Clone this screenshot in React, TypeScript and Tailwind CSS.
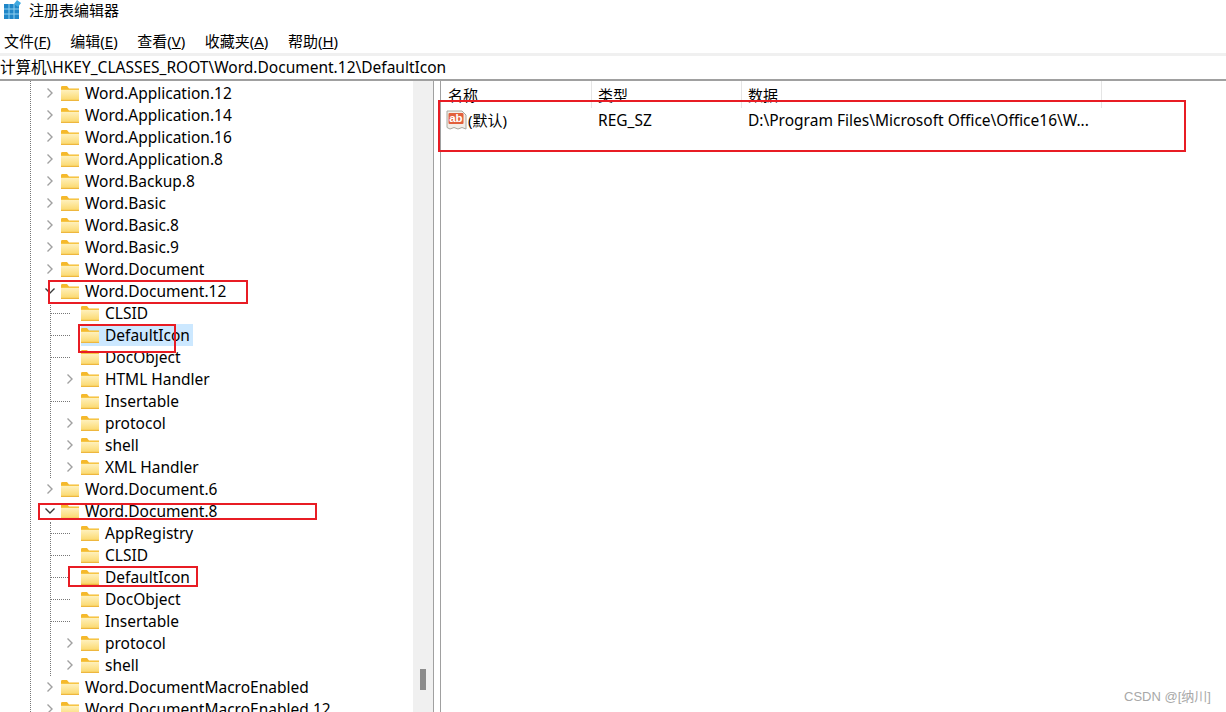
import React from 'react';

type Row = { name: string; depth: 0 | 1; state?: 'open' | 'closed' | 'leaf'; selected?: boolean };

const ROWS: Row[] = [
  { name: 'Word.Application.12', depth: 0, state: 'closed' },
  { name: 'Word.Application.14', depth: 0, state: 'closed' },
  { name: 'Word.Application.16', depth: 0, state: 'closed' },
  { name: 'Word.Application.8', depth: 0, state: 'closed' },
  { name: 'Word.Backup.8', depth: 0, state: 'closed' },
  { name: 'Word.Basic', depth: 0, state: 'closed' },
  { name: 'Word.Basic.8', depth: 0, state: 'closed' },
  { name: 'Word.Basic.9', depth: 0, state: 'closed' },
  { name: 'Word.Document', depth: 0, state: 'closed' },
  { name: 'Word.Document.12', depth: 0, state: 'open' },
  { name: 'CLSID', depth: 1, state: 'leaf' },
  { name: 'DefaultIcon', depth: 1, state: 'leaf', selected: true },
  { name: 'DocObject', depth: 1, state: 'leaf' },
  { name: 'HTML Handler', depth: 1, state: 'closed' },
  { name: 'Insertable', depth: 1, state: 'leaf' },
  { name: 'protocol', depth: 1, state: 'closed' },
  { name: 'shell', depth: 1, state: 'closed' },
  { name: 'XML Handler', depth: 1, state: 'closed' },
  { name: 'Word.Document.6', depth: 0, state: 'closed' },
  { name: 'Word.Document.8', depth: 0, state: 'open' },
  { name: 'AppRegistry', depth: 1, state: 'leaf' },
  { name: 'CLSID', depth: 1, state: 'leaf' },
  { name: 'DefaultIcon', depth: 1, state: 'leaf' },
  { name: 'DocObject', depth: 1, state: 'leaf' },
  { name: 'Insertable', depth: 1, state: 'leaf' },
  { name: 'protocol', depth: 1, state: 'closed' },
  { name: 'shell', depth: 1, state: 'closed' },
  { name: 'Word.DocumentMacroEnabled', depth: 0, state: 'closed' },
  { name: 'Word.DocumentMacroEnabled.12', depth: 0, state: 'closed' },
];

const MENUS = [
  ['文件(', 'F', ')'],
  ['编辑(', 'E', ')'],
  ['查看(', 'V', ')'],
  ['收藏夹(', 'A', ')'],
  ['帮助(', 'H', ')'],
];

function Folder() {
  return (
    <svg width="18" height="15" viewBox="0 0 18 15" className="shrink-0">
      <defs>
        <linearGradient id="fold" x1="0" y1="0" x2="0" y2="1">
          <stop offset="0" stopColor="#fff3c4" />
          <stop offset="1" stopColor="#fbd768" />
        </linearGradient>
      </defs>
      <path d="M0 1.5C0 .7.5 0 1.2 0H6l2 2.5h10V5H0z" fill="#f5b92c" />
      <rect x="0" y="3" width="18" height="12" fill="url(#fold)" />
      <rect x="0" y="13.8" width="18" height="1.2" fill="#eeb73e" />
      <rect x="0" y="3" width="18" height="1" fill="#f6c544" />
    </svg>
  );
}

function Chevron({ open }: { open: boolean }) {
  return (
    <svg width="12" height="12" viewBox="0 0 12 12" className="shrink-0">
      {open ? (
        <path d="M1.5 3.5 6 8l4.5-4.5" fill="none" stroke="#3a3a3a" strokeWidth="1.4" />
      ) : (
        <path d="M3.5 1.5 8 6l-4.5 4.5" fill="none" stroke="#a0a0a0" strokeWidth="1.4" />
      )}
    </svg>
  );
}

function TreeRow({ row }: { row: Row }) {
  return (
    <div className={`flex h-[22px] items-center ${row.depth === 1 ? 'pl-[64px]' : 'pl-[44px]'}`}>
      <div className="flex w-[17px] shrink-0 justify-start">
        {row.state === 'leaf' ? (
          <div className="ml-[-14px] w-[20px] border-t border-dotted border-[#777]" />
        ) : (
          <Chevron open={row.state === 'open'} />
        )}
      </div>
      <div
        className={`flex h-[22px] items-center pr-[3px] ${row.selected ? 'bg-[#cce8ff]' : ''}`}
      >
        <Folder />
        <span className="ml-[6px] whitespace-nowrap pt-[2px] text-[15.5px] text-black">{row.name}</span>
      </div>
    </div>
  );
}

export default function App() {
  return (
    <div className="relative h-[712px] w-[1226px] overflow-hidden bg-white font-['Noto_Sans','Noto_Sans_CJK_SC',sans-serif] text-black">
      {/* 标题栏 */}
      <div className="flex h-[20px] items-center gap-[7px] pl-[4px] text-[15px]">
        <svg width="18" height="20" viewBox="0 0 18 20">
          <rect x="0" y="4" width="15" height="15" fill="#1f86c8" />
          <path d="M5 4v15M10 4v15M0 9h15M0 14h15" stroke="#8fd0f0" strokeWidth="1" />
          <path d="M13 0l4 3-3 4-4-3z" fill="#3fa9e0" />
        </svg>
        <span>注册表编辑器</span>
      </div>

      {/* 菜单 */}
      <div className="mt-[8px] flex h-[25px] items-center gap-[19.5px] pl-[4px] pt-[2px] text-[15px]">
        {MENUS.map(m => (
          <span key={m[1]}>
            {m[0]}
            <span className="underline">{m[1]}</span>
            {m[2]}
          </span>
        ))}
      </div>
      <div className="h-[3px] bg-[#f0f0f0]" />

      {/* 地址栏 */}
      <div className="flex h-[23px] items-center whitespace-nowrap text-[15.5px]">计算机\HKEY_CLASSES_ROOT\Word.Document.12\DefaultIcon</div>
      <div className="h-[2px] bg-[#a0a0a0]" />

      <div className="flex h-[631px]">
        {/* 左侧树 */}
        <div className="relative w-[433px] shrink-0 overflow-hidden pt-[1px]">
          <div className="absolute bottom-0 left-[30px] top-0 border-l border-dotted border-[#777]" />
          <div className="absolute left-[50px] top-[221px] h-[176px] border-l border-dotted border-[#777]" />
          <div className="absolute left-[50px] top-[441px] h-[154px] border-l border-dotted border-[#777]" />
          {ROWS.map((row, i) => (
            <TreeRow key={i} row={row} />
          ))}
          {/* 滚动条 */}
          <div className="absolute bottom-0 right-0 top-0 w-[20px] bg-[#f0f0f0]">
            <div className="absolute left-[7px] top-[588px] h-[21px] w-[6px] bg-[#8c8c8c]" />
          </div>
        </div>
        <div className="w-[1px] bg-[#a0a0a0]" />
        <div className="w-[6px] bg-white" />
        <div className="w-[1px] bg-[#a0a0a0]" />

        {/* 右侧列表 */}
        <div className="flex-1">
          <div className="flex h-[27px] text-[15px]">
            <div className="w-[151px] border-r border-[#e5e5e5] pl-[7px] leading-[28px]">名称</div>
            <div className="w-[150px] border-r border-[#e5e5e5] pl-[6px] leading-[28px]">类型</div>
            <div className="w-[360px] border-r border-[#e5e5e5] pl-[6px] leading-[28px]">数据</div>
          </div>
          <div className="flex h-[24px] items-center text-[15.5px]">
            <div className="flex w-[151px] items-center pl-[5px]">
              <svg width="22" height="21" viewBox="0 0 22 21" className="shrink-0">
                <path d="M1 1h15l4 4v14l-4-1.5-4 1.5-4-1.5L4 19l-3-1.5z" fill="#f2eee8" stroke="#a8a8a0" strokeWidth="1" />
                <rect x="2.5" y="3" width="15" height="11" rx="1" fill="#e2603c" />
                <text x="3.2" y="12.4" fontSize="11.5" fontWeight="700" fill="#fff" fontFamily="'Liberation Sans',sans-serif">ab</text>
              </svg>
              <span className="text-[15px]">(默认)</span>
            </div>
            <div className="w-[150px] pl-[6px] pt-[2px]">REG_SZ</div>
            <div className="whitespace-nowrap pl-[6px] pt-[2px]">D:\Program Files\Microsoft Office\Office16\W...</div>
          </div>
        </div>
      </div>

      {/* 红框标注 */}
      <div className="absolute left-[438px] top-[100px] h-[52px] w-[748px] border-2 border-[#e81c24]" />
      <div className="absolute left-[48px] top-[280px] h-[24px] w-[200px] border-2 border-[#e81c24]" />
      <div className="absolute left-[78px] top-[324px] h-[29px] w-[98px] border-2 border-[#e81c24]" />
      <div className="absolute left-[38px] top-[503px] h-[17px] w-[279px] border-2 border-[#e81c24]" />
      <div className="absolute left-[68px] top-[566px] h-[21px] w-[130px] border-2 border-[#e81c24]" />

      {/* 水印 */}
      <div className="absolute left-[1124px] top-[687px] font-['Liberation_Sans','Noto_Sans_CJK_SC',sans-serif] text-[13px] text-[#a8a8a8]">CSDN @[纳川]</div>
    </div>
  );
}
